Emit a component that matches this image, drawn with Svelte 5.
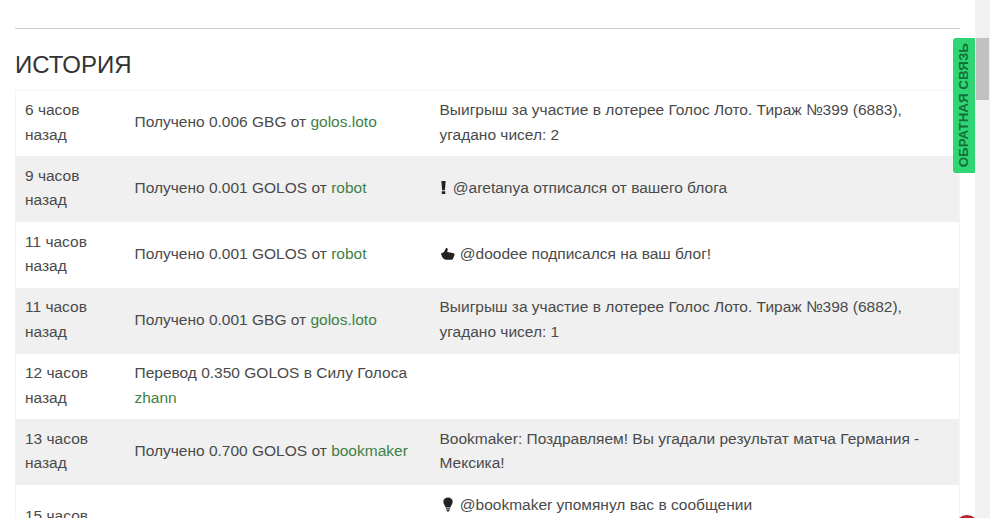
<script>
  const rows = [
    { time: '6 часов назад', op: 'Получено 0.006 GBG от ', user: 'golos.loto', msg: 'Выигрыш за участие в лотерее Голос Лото. Тираж №399 (6883), угадано чисел: 2' },
    { time: '9 часов назад', op: 'Получено 0.001 GOLOS от ', user: 'robot', icon: 'alert', msg: '@aretanya отписался от вашего блога' },
    { time: '11 часов назад', op: 'Получено 0.001 GOLOS от ', user: 'robot', icon: 'thumb', msg: '@doodee подписался на ваш блог!' },
    { time: '11 часов назад', op: 'Получено 0.001 GBG от ', user: 'golos.loto', msg: 'Выигрыш за участие в лотерее Голос Лото. Тираж №398 (6882), угадано чисел: 1' },
    { time: '12 часов назад', op: 'Перевод 0.350 GOLOS в Силу Голоса ', user: 'zhann', msg: '' },
    { time: '13 часов назад', op: 'Получено 0.700 GOLOS от ', user: 'bookmaker', msg: 'Bookmaker: Поздравляем! Вы угадали результат матча Германия - Мексика!' },
    { time: '15 часов назад', op: '', user: '', icon: 'bulb', msg: '@bookmaker упомянул вас в сообщении' }
  ];
</script>

<div class="page">
  <main class="content">
    <hr class="rule" />
    <h2 class="title">История</h2>
    <table class="history">
      <colgroup>
        <col class="c1" />
        <col class="c2" />
        <col class="c3" />
      </colgroup>
      <tbody>
        {#each rows as r}
          <tr class:tall={r.icon === 'bulb'}>
            <td>{r.time}</td>
            <td>{r.op}<a href="#u" class="user">{r.user}</a></td>
            <td class:top={r.icon === 'bulb'}>
              {#if r.icon === 'alert'}
                <svg class="ico alert" viewBox="0 0 6 14"><path d="M1 1h4L4.300 9.500H1.700z M1.400 10.600h3.200V13H1.400z" /></svg>
              {:else if r.icon === 'thumb'}
                <svg class="ico wide" viewBox="0 0 16 14"><path d="M1 7 4 5.500 6 1.500c1.300-.3 2 .8 1.700 2L7.200 5.600l5.800 1c1.200.2 1.800 1.300 1.400 2.200L13 12.300c-.3.600-1 .9-1.800.9H6C3.500 13.200 2 11 1 7z" /></svg>
              {:else if r.icon === 'bulb'}
                <svg class="ico wide" viewBox="0 0 16 16"><path d="M8 .5c-2.900 0-5 2-5 4.600 0 2.600 1.900 3.600 2.400 6h5.200c.5-2.400 2.400-3.400 2.400-6C13 2.500 10.900.5 8 .5z M5.800 12h4.400v1.200H5.800z M6.400 13.800h3.200L8.800 15.500H7.200z" /></svg>
              {/if}
              {r.msg}
            </td>
          </tr>
        {/each}
      </tbody>
    </table>
    <button class="feedback"><span>Обратная связь</span></button>
    <div class="dot"></div>
  </main>
  <aside class="scrollbar"><div class="thumb"></div></aside>
</div>

<style>
  :global(body) {
    margin: 0;
    background: #fff;
    overflow: hidden;
  }
  .page {
    display: flex;
    width: 990px;
    height: 518px;
    overflow: hidden;
    font-family: "Liberation Sans", Arial, sans-serif;
    font-size: 15.500px;
    color: #4a4a4a;
  }
  .content {
    position: relative;
    width: 975px;
    padding: 28px 15px 0;
    box-sizing: border-box;
    overflow: hidden;
  }
  .rule {
    margin: 0;
    border: 0;
    border-top: 1px solid #ccc;
  }
  .title {
    margin: 23px 0 12px;
    font-size: 24px;
    line-height: 26px;
    font-weight: 400;
    text-transform: uppercase;
    color: #333;
  }
  .history {
    width: 945px;
    table-layout: fixed;
    border-collapse: collapse;
    border: 1px solid #f4f4f4;
    line-height: 24.400px;
  }
  .c1 { width: 110px; }
  .c2 { width: 305px; }
  tr {
    height: 65.800px;
  }
  tr.tall {
    height: 88px;
  }
  tr:nth-child(even) {
    background: #f0f0f0;
  }
  td {
    padding: 7px 9px 9px;
    vertical-align: middle;
  }
  td.top {
    vertical-align: top;
    padding-top: 8px;
  }
  .user {
    color: #3f7f46;
    text-decoration: none;
  }
  .ico {
    display: inline-block;
    width: 16px;
    height: 15px;
    vertical-align: -2px;
    fill: #222;
  }
  .ico.alert {
    width: 7px;
    margin-right: 2px;
  }
  .feedback {
    position: absolute;
    top: 38px;
    right: 0;
    width: 22px;
    height: 135px;
    padding: 0;
    border: 0;
    border-radius: 3px 0 0 3px;
    background: #2fd673;
    color: #14703a;
    font: 700 13.400px "Liberation Sans", Arial, sans-serif;
    text-transform: uppercase;
  }
  .feedback span {
    display: block;
    writing-mode: vertical-rl;
    transform: rotate(180deg);
    margin: auto;
    line-height: 22px;
    white-space: nowrap;
  }
  .dot {
    position: absolute;
    left: 955px;
    top: 515px;
    width: 24px;
    height: 24px;
    border-radius: 50%;
    background: #b8232f;
  }
  .scrollbar {
    width: 15px;
    height: 518px;
    background: #f1f1f1;
  }
  .thumb {
    width: 13px;
    height: 62px;
    margin: 38px 0 0 1px;
    background: #c1c1c1;
  }
</style>
